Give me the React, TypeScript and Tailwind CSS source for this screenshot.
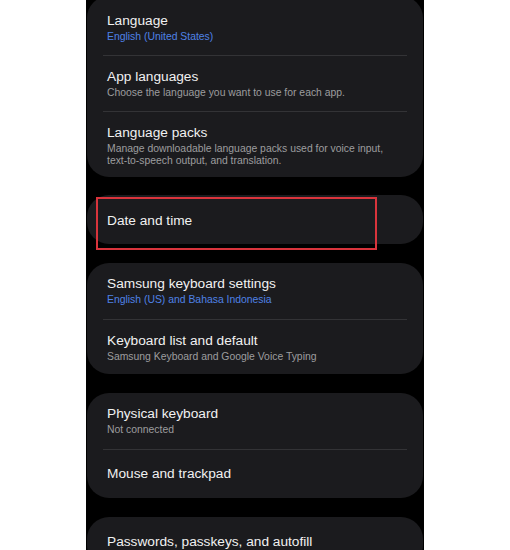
import React from "react";

type Item = {
  title: string;
  sub?: string;
  blue?: boolean;
};

const Row: React.FC<{ item: Item; pad?: string }> = ({ item, pad }) => (
  <div className={"px-5 " + (pad ?? "pt-3 pb-[13px]")}>
    <p className="text-[13.7px] leading-[18px] text-[#f1f1f1]">{item.title}</p>
    {item.sub && (
      <p
        className={
          "text-[10.4px] leading-[12px] mt-[1px] " +
          (item.blue ? "text-[#4f82e6]" : "text-[#9d9d9f]")
        }
      >
        {item.sub}
      </p>
    )}
  </div>
);

const Divider = () => <div className="mx-4 h-px bg-[#333336]" />;

const Card: React.FC<{ children: React.ReactNode; className?: string }> = ({ children, className }) => (
  <div className={"mx-px rounded-[22px] bg-[#1b1b1e] " + (className ?? "")}>{children}</div>
);

const App: React.FC = () => {
  return (
    <div
      className="w-[510px] h-[550px] overflow-hidden bg-white flex"
      style={{ fontFamily: '"Liberation Sans", Arial, sans-serif' }}
    >
      <div className="ml-[86px] w-[338px] h-full bg-black flex flex-col">
        <Card className="-mt-[4px] pt-[4px]">
          <Row item={{ title: "Language", sub: "English (United States)", blue: true }} pad="pt-3 pb-3" />
          <Divider />
          <Row
            item={{ title: "App languages", sub: "Choose the language you want to use for each app." }}
            pad="pt-3 pb-3"
          />
          <Divider />
          <Row
            pad="pt-3 pb-[10px]"
            item={{
              title: "Language packs",
              sub: "Manage downloadable language packs used for voice input, text-to-speech output, and translation.",
            }}
          />
        </Card>

        <div className="relative mt-[18px]">
          <Card>
            <Row item={{ title: "Date and time" }} pad="pt-[17px] pb-[14px]" />
          </Card>
          <div className="absolute left-[10px] top-[2px] w-[281px] h-[53px] border-2 border-[#d9343c]" />
        </div>

        <Card className="mt-[19px]">
          <Row item={{ title: "Samsung keyboard settings", sub: "English (US) and Bahasa Indonesia", blue: true }} />
          <Divider />
          <Row
            pad="pt-3 pb-[11px]"
            item={{ title: "Keyboard list and default", sub: "Samsung Keyboard and Google Voice Typing" }}
          />
        </Card>

        <Card className="mt-[19px]">
          <Row item={{ title: "Physical keyboard", sub: "Not connected" }} />
          <Divider />
          <Row item={{ title: "Mouse and trackpad" }} pad="py-[15px]" />
        </Card>

        <Card className="mt-[19px]">
          <Row item={{ title: "Passwords, passkeys, and autofill" }} pad="pt-4 pb-4" />
        </Card>
      </div>
    </div>
  );
};

export default App;
